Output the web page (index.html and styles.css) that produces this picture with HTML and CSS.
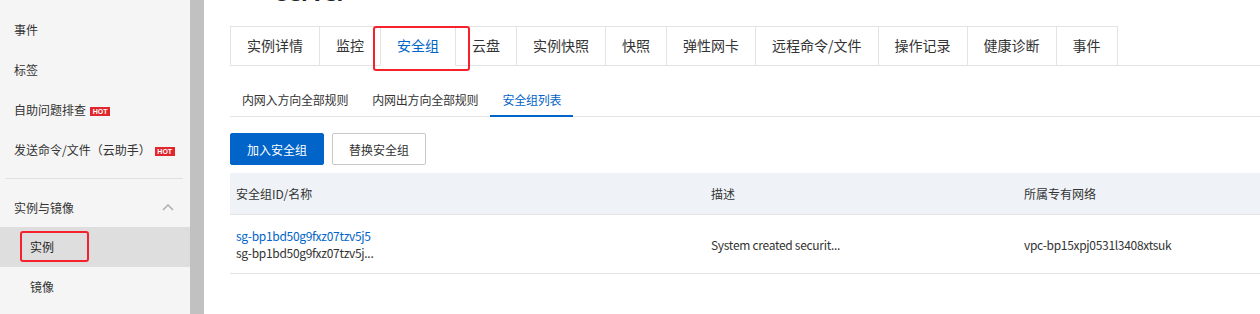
FILE: index.html
```html
<!DOCTYPE html>
<html lang="zh-CN">
<head>
  <meta charset="UTF-8" />
  <title>实例 - 安全组</title>
  <link rel="stylesheet" href="styles.css">
</head>
<body>

  <aside class="sidebar">
    <ul class="menu">
      <li class="menu-item">事件</li>
      <li class="menu-item">标签</li>
      <li class="menu-item">自助问题排查<span class="hot">HOT</span></li>
      <li class="menu-item">发送命令/文件（云助手）<span class="hot">HOT</span></li>
    </ul>
    <div class="menu-divider"></div>
    <div class="menu-group">
      <span>实例与镜像</span>
      <svg class="chevron" width="12" height="8" viewBox="0 0 12 8"><path d="M1 7 L6 2 L11 7" fill="none" stroke="#a8a8a8" stroke-width="1.3"/></svg>
    </div>
    <ul class="menu">
      <li class="menu-item sub active">实例<span class="mark mark-menu"></span></li>
      <li class="menu-item sub">镜像</li>
    </ul>
  </aside>

  <div class="splitter"></div>

  <main class="content">
    <div class="title"><span>-server</span></div>

    <div class="tabs">
      <div class="tab">实例详情</div>
      <div class="tab">监控</div>
      <div class="tab active">安全组</div>
      <div class="tab">云盘</div>
      <div class="tab">实例快照</div>
      <div class="tab">快照</div>
      <div class="tab">弹性网卡</div>
      <div class="tab">远程命令/文件</div>
      <div class="tab">操作记录</div>
      <div class="tab">健康诊断</div>
      <div class="tab">事件</div>
      <span class="mark mark-tab"></span>
    </div>

    <div class="subtabs">
      <div class="subtab">内网入方向全部规则</div>
      <div class="subtab">内网出方向全部规则</div>
      <div class="subtab active">安全组列表</div>
    </div>

    <div class="toolbar">
      <button class="btn btn-primary">加入安全组</button>
      <button class="btn">替换安全组</button>
    </div>

    <div class="table">
      <div class="row head">
        <div class="cell">安全组ID/名称</div>
        <div class="cell">描述</div>
        <div class="cell">所属专有网络</div>
      </div>
      <div class="row body">
        <div class="cell">
          <a class="link" href="#">sg-bp1bd50g9fxz07tzv5j5</a>
          <div>sg-bp1bd50g9fxz07tzv5j...</div>
        </div>
        <div class="cell">System created securit...</div>
        <div class="cell">vpc-bp15xpj0531l3408xtsuk</div>
      </div>
    </div>
  </main>

</body>
</html>
```

FILE: styles.css
```css
* {
  box-sizing: border-box;
  margin: 0;
  padding: 0;
}

body {
  display: flex;
  height: 314px;
  overflow: hidden;
  font-family: "Noto Sans CJK SC", "Noto Sans", sans-serif;
  font-size: 12px;
  color: #333;
  background: #fff;
}

/* sidebar */
.sidebar {
  width: 190px;
  flex-shrink: 0;
  background: #f5f5f5;
  padding-top: 10px;
}

.menu {
  list-style: none;
}

.menu-item {
  position: relative;
  height: 40px;
  line-height: 40px;
  padding-left: 14px;
  white-space: nowrap;
}

.menu-item.sub {
  padding-left: 30px;
}

.menu-item.active {
  background: #dedede;
  color: #222;
}

.hot {
  display: inline-block;
  vertical-align: 1px;
  margin-left: 4px;
  width: 20px;
  height: 9px;
  line-height: 9px;
  background: #e2262d;
  color: #fff;
  font-size: 7px;
  font-weight: bold;
  text-align: center;
  font-family: "Liberation Sans", sans-serif;
}

.menu-divider {
  height: 1px;
  background: #e0e0e0;
  margin: 8px 7px 8px 5px;
}

.menu-group {
  display: flex;
  align-items: center;
  justify-content: space-between;
  height: 40px;
  padding: 0 16px 0 14px;
}

.splitter {
  width: 14px;
  flex-shrink: 0;
  background: #c1c1c1;
}

/* red annotation frames */
.mark {
  position: absolute;
  border: 2px solid #f5222d;
  border-radius: 3px;
  pointer-events: none;
}

.mark-menu {
  left: 20px;
  top: 4px;
  width: 69px;
  height: 31px;
}

.mark-tab {
  left: 143px;
  top: 0;
  width: 97px;
  height: 45px;
}

/* main */
.content {
  flex: 1;
  min-width: 0;
  padding-left: 26px;
  overflow: hidden;
}

.title {
  height: 26px;
  overflow: hidden;
  padding-left: 40px;
}

.title span {
  display: block;
  margin-top: -19px;
  font-family: "Open Sans", sans-serif;
  font-size: 22px;
  line-height: 22px;
  font-weight: bold;
  color: #222;
}

.tabs {
  position: relative;
  display: flex;
  border-bottom: 1px solid #e3e3e3;
}

.tab {
  height: 39px;
  line-height: 37px;
  padding: 0 16px;
  font-size: 14px;
  border: 1px solid #e3e3e3;
  border-left: none;
  border-bottom: none;
  background: #fff;
  white-space: nowrap;
}

.tab:first-child {
  border-left: 1px solid #e3e3e3;
}

.tab.active {
  color: #0064c8;
  height: 40px;
  margin-bottom: -1px;
}

.subtabs {
  display: flex;
  margin-top: 18px;
  height: 33px;
  border-bottom: 1px solid #e3e3e3;
}

.subtab {
  height: 33px;
  line-height: 31px;
  padding: 0 12px;
  letter-spacing: -0.2px;
  white-space: nowrap;
}

.subtab.active {
  color: #0064c8;
  border-bottom: 2px solid #0064c8;
}

.toolbar {
  display: flex;
  gap: 8px;
  margin-top: 16px;
}

.btn {
  height: 32px;
  padding: 0 16px;
  border: 1px solid #c8c8c8;
  border-radius: 2px;
  background: #fff;
  color: #333;
  font-family: inherit;
  font-size: 12px;
}

.btn-primary {
  background: #0064c8;
  border-color: #0064c8;
  color: #fff;
}

.table {
  margin-top: 8px;
  width: 1100px;
}

.row {
  display: grid;
  grid-template-columns: 475px 313px 1fr;
  align-items: center;
  height: 59px;
  border-bottom: 1px solid #e3e3e3;
}

.row.head {
  height: 42px;
  background: #eff3f8;
}

.cell {
  padding-left: 6px;
  line-height: 17px;
  white-space: nowrap;
}

.row.body .cell {
  letter-spacing: -0.3px;
}

.link {
  color: #0064c8;
  text-decoration: none;
}
```
